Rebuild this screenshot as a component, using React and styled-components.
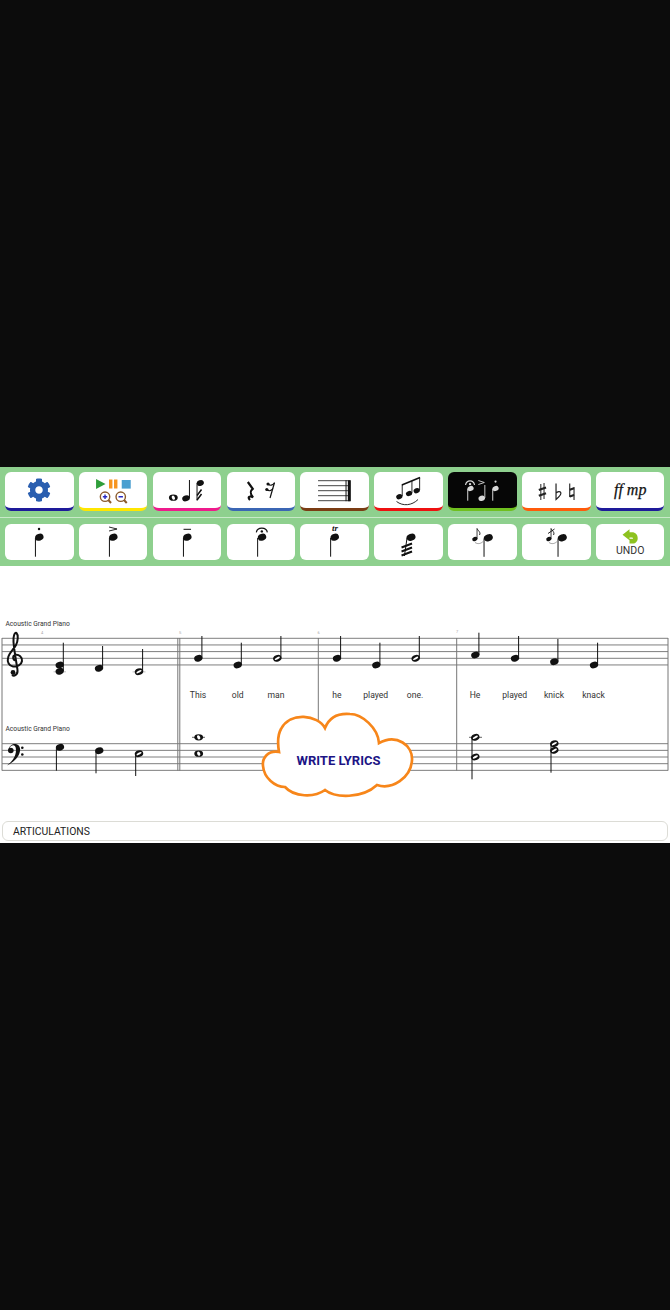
import styled, { createGlobalStyle } from 'styled-components';
import { FaCog } from 'react-icons/fa';

const GlobalStyles = createGlobalStyle`
  * {
    box-sizing: border-box;
  }

  body {
    margin: 0;
    background-color: #0c0c0c;
    font-family: Roboto, sans-serif;
  }
`;

const Screen = styled.div`
  height: 1310px;
  padding-top: 467px;
`;

const Panel = styled.div`
  width: 670px;
  background-color: white;
  padding-bottom: 2px;
`;

const Toolbar = styled.div`
  height: 99px;
  background-color: #8ed08e;
  padding-top: 5px;
`;

const ButtonRow = styled.div`
  display: grid;
  grid-template-columns: repeat(9, 1fr);
  column-gap: 5.3px;
  padding: 0 5.5px 0 5px;
`;

const Divider = styled.div`
  height: 1.5px;
  margin: 5.5px 0 6px;
  background-color: #c8eac8;
`;

const ToolButton = styled.div`
  height: ${({ $accent }) => ($accent ? '39px' : '36px')};
  border-radius: 6px;
  background-color: ${({ $active }) => ($active ? '#060606' : 'white')};
  border-bottom: ${({ $accent }) => ($accent ? `3px solid ${$accent}` : 'none')};
  color: ${({ $active }) => ($active ? '#d8d8d8' : '#111')};
  display: flex;
  flex-direction: column;
  align-items: center;
  justify-content: center;
  overflow: hidden;
`;

const Icon = styled.svg.attrs({ viewBox: '0 0 68.5 36' })`
  display: block;
  width: 100%;
  height: 36px;
  flex: none;
`;

const GearIcon = styled(FaCog)`
  color: #2b5fb0;
  font-size: 24px;
`;

const Dynamics = styled.span`
  font-family: "Liberation Serif", serif;
  font-style: italic;
  font-size: 16px;
  color: #111;
  -webkit-text-stroke: 0.25px #111;
`;

const UndoLabel = styled.span`
  font-size: 10.5px;
  line-height: 11px;
  color: #333;
  margin-top: 1px;
`;

const ScoreArea = styled.div`
  position: relative;
  height: 255px;
`;

const ScoreSvg = styled.svg.attrs({ viewBox: '0 566 670 255' })`
  display: block;
  width: 670px;
  height: 255px;
`;

const ScoreLabel = styled.text`
  font-family: Roboto, sans-serif;
  font-size: 6.7px;
  fill: #333;
`;

const Lyric = styled.text`
  font-family: Roboto, sans-serif;
  font-size: 8.6px;
  fill: #333;
  text-anchor: middle;
`;

const BarNumber = styled.text`
  font-family: Roboto, sans-serif;
  font-size: 4px;
  fill: #aaa;
  text-anchor: middle;
`;

const Cloud = styled.div`
  position: absolute;
  left: 261px;
  top: 146px;
  width: 153px;
  height: 86px;
  display: flex;
  align-items: center;
  justify-content: center;
`;

const CloudShape = styled.svg.attrs({ viewBox: '261 712 153 86' })`
  position: absolute;
  inset: 0;
  width: 153px;
  height: 86px;
`;

const CloudLabel = styled.span`
  position: relative;
  font-weight: 700;
  font-size: 13px;
  color: #1c1485;
  margin: 10px 0 0 2px;
`;

const ArticulationsBar = styled.div`
  margin: 0 2px;
  height: 20px;
  border: 1px solid #dcdcd6;
  border-radius: 6px;
  padding-left: 10px;
  display: flex;
  align-items: center;
  font-size: 10.4px;
  color: #222;
`;

const Head = ({ x, y, rx = 4.2, ry = 3.3, fill = 'currentColor' }) => (
  <ellipse cx={x} cy={y} rx={rx} ry={ry} fill={fill} transform={`rotate(-20 ${x} ${y})`} />
);

const HalfHead = ({ x, y }) => (
  <g>
    <ellipse cx={x} cy={y} rx={4.3} ry={3.3} fill="#111" transform={`rotate(-20 ${x} ${y})`} />
    <ellipse cx={x} cy={y} rx={2.9} ry={1} fill="#fff" transform={`rotate(-28 ${x} ${y})`} />
  </g>
);

const WholeHead = ({ x, y }) => (
  <g>
    <ellipse cx={x} cy={y} rx={4.4} ry={3.1} fill="#111" />
    <ellipse cx={x} cy={y} rx={1.5} ry={2.2} fill="#fff" transform={`rotate(-25 ${x} ${y})`} />
  </g>
);

const Stem = ({ x, y1, y2, width = 1 }) => (
  <line x1={x} x2={x} y1={y1} y2={y2} stroke="currentColor" strokeWidth={width} />
);

const FermataMark = ({ x, y, size = 5.5 }) => (
  <g>
    <path d={`M${x - size} ${y + 4.5} C${x - size + 1} ${y - 1} ${x + size - 1} ${y - 1} ${x + size} ${y + 4.5}`} fill="none" stroke="currentColor" strokeWidth="1.2" />
    <circle cx={x} cy={y + 3.6} r="1.2" fill="currentColor" />
  </g>
);

const AccentMark = ({ x, y, size = 4 }) => (
  <path d={`M${x - size} ${y - 2} L${x + size} ${y} L${x - size} ${y + 2}`} fill="none" stroke="currentColor" strokeWidth="0.9" />
);

const ArticulationNote = ({ x = 34.3, stem = 30.4, children }) => (
  <Icon>
    <Head x={x} y={13.2} rx={4.3} ry={3.4} />
    <Stem x={stem} y1={14} y2={32.7} />
    {children}
  </Icon>
);

const GraceNote = ({ slashed }) => (
  <Icon>
    <Head x={40.3} y={13.8} rx={4.6} ry={3.4} />
    <Stem x={36} y1={14.5} y2={32.8} />
    <Head x={26.8} y={15} rx={2.7} ry={2} />
    <Stem x={29} y1={4.5} y2={15} width={0.8} />
    <path d="M29 4.5 C30 7 33 8 31.5 11" fill="none" stroke="currentColor" strokeWidth="0.9" />
    <path d="M27 18.5 C30 20.5 33 19.5 35 17.5" fill="none" stroke="#777" strokeWidth="0.7" />
    {slashed && <line x1="26" y1="9.5" x2="32.5" y2="5" stroke="currentColor" strokeWidth="0.9" />}
  </Icon>
);

const MediaIcon = () => (
  <Icon>
    <polygon points="17,7 17,17 26.5,12" fill="#2f9e3a" />
    <rect x="30" y="7.5" width="3.4" height="9" fill="#f7941d" />
    <rect x="35" y="7.5" width="3.4" height="9" fill="#f7941d" />
    <rect x="42.7" y="8" width="9" height="8.6" fill="#4a9fd0" />
    <g fill="none" stroke="#8b5a2b" strokeWidth="1.4">
      <circle cx="26" cy="24.7" r="4.7" />
      <circle cx="41.7" cy="24.7" r="4.7" />
      <line x1="29.3" y1="28" x2="32" y2="31" strokeWidth="2" />
      <line x1="45" y1="28" x2="47.7" y2="31" strokeWidth="2" />
    </g>
    <g stroke="#2a2ac0" strokeWidth="1.4">
      <line x1="23.8" y1="24.7" x2="28.2" y2="24.7" />
      <line x1="26" y1="22.5" x2="26" y2="26.9" />
      <line x1="39.5" y1="24.7" x2="43.9" y2="24.7" />
    </g>
  </Icon>
);

const NotesIcon = () => (
  <Icon>
    <WholeHead x={20.3} y={25.7} />
    <Head x={33} y={26.3} rx={3.9} ry={2.9} />
    <Stem x={36.4} y1={8} y2={26} />
    <Head x={47.3} y={11} rx={3.6} ry={2.9} />
    <Stem x={44} y1={11} y2={28.5} />
    <path d="M44 28 L48.5 22 M44 23.5 L48.5 17.5" stroke="currentColor" strokeWidth="1.5" fill="none" />
  </Icon>
);

const RestsIcon = () => (
  <Icon>
    <path d="M20.8 10 L25.7 16.8 C23 19 22.5 21 26 25.4 C22.5 23.5 20 25 23 28" fill="none" stroke="currentColor" strokeWidth="2.2" />
    <line x1="47.5" y1="10.5" x2="43" y2="26" stroke="currentColor" strokeWidth="1.2" />
    <path d="M41 12 C43 14 45.5 13.5 47.4 11 M39.8 17.5 C42 19.5 44 19 45.9 16.5" fill="none" stroke="currentColor" strokeWidth="1.2" />
    <circle cx="41" cy="12" r="1.6" fill="currentColor" />
    <circle cx="39.8" cy="17.5" r="1.6" fill="currentColor" />
  </Icon>
);

const StaffIcon = () => (
  <Icon>
    {[8.7, 13.7, 18.7, 23.7, 28.7].map((y) => (
      <line key={y} x1="18" x2="50" y1={y} y2={y} stroke="#444" strokeWidth="1" />
    ))}
    <Stem x={46} y1={8.2} y2={29.2} width={1} />
    <Stem x={49.3} y1={8.2} y2={29.2} width={3} />
  </Icon>
);

const BeamIcon = () => (
  <Icon>
    <Head x={25.3} y={24.7} rx={3.2} ry={2.5} />
    <Head x={35} y={21.5} rx={3.2} ry={2.5} />
    <Head x={42.7} y={18.7} rx={3.2} ry={2.5} />
    <Stem x={28.2} y1={13} y2={24} width={0.9} />
    <Stem x={37.9} y1={9} y2={21} width={0.9} />
    <Stem x={45.6} y1={5.8} y2={18} width={0.9} />
    <line x1="27.8" y1="13" x2="46" y2="5.6" stroke="currentColor" strokeWidth="1.6" />
    <path d="M22.5 29.5 C29 34.5 38 33.5 44 27.5" fill="none" stroke="currentColor" strokeWidth="0.9" />
  </Icon>
);

const ArticulationsIcon = () => (
  <Icon>
    <Head x={22.5} y={16.5} rx={3.2} ry={2.5} />
    <Stem x={19.7} y1={17} y2={28.7} />
    <FermataMark x={22} y={8.5} size={4.5} />
    <Head x={33.7} y={26.3} rx={3.3} ry={2.6} />
    <Stem x={36.8} y1={13} y2={26} width={0.9} />
    <AccentMark x={33.3} y={10.5} size={3} />
    <Head x={47.5} y={16.5} rx={3.2} ry={2.5} />
    <Stem x={44.7} y1={17} y2={28.7} />
    <circle cx="47.5" cy="9.6" r="1.1" fill="currentColor" />
  </Icon>
);

const AccidentalsIcon = () => (
  <Icon>
    <g stroke="#222" fill="none">
      <path d="M18.8 12 V28 M22 11 V27" strokeWidth="1" />
      <path d="M16.8 18 L24 15.5 M16.8 23.8 L24 21.3" strokeWidth="2.2" />
      <path d="M34 11.5 V27.5 C37 25 39.5 23 38.8 20.7 C38 19 35.5 19.5 34 21.2" strokeWidth="1.2" />
      <path d="M47.7 11.5 V24.5 L52 23 M52 15 V28" strokeWidth="1.1" />
      <path d="M47.7 17.8 L52 16.2 M47.7 24.5 L52 23" strokeWidth="2" />
    </g>
  </Icon>
);

const TremoloIcon = () => (
  <Icon>
    <Head x={37} y={13.3} rx={4.6} ry={3.4} />
    <line x1="33" y1="14" x2="30.4" y2="32" stroke="currentColor" strokeWidth="1" />
    <path d="M27.5 23.5 L38 19.5 M27.5 27.5 L38 23.5 M27.5 31.5 L38 27.5" stroke="currentColor" strokeWidth="1.9" />
  </Icon>
);

const UndoArrow = () => (
  <svg width="16" height="15" viewBox="0 0 16 15">
    <path d="M0.5 5.8 L7.5 0.3 V3.2 H10 C13.5 3.2 15.7 5.6 15.7 9.2 C15.7 12.4 13.5 14.5 11 14.5 H7.5 V9.8 H10 C10.8 9.8 11 9.6 11 9.2 C11 8.7 10.5 8.5 9.5 8.5 H7.5 V11.3 Z" fill="#8dc21f" />
  </svg>
);

const staffLines = (top) => [0, 6.65, 13.3, 20, 26.65].map((offset) => top + offset);

const upNotes = [
  { x: 198.3, y: 658.3, top: 636 },
  { x: 237.7, y: 665, top: 642.7 },
  { x: 277.3, y: 658.3, top: 636, half: true },
  { x: 337, y: 658.3, top: 636 },
  { x: 376.3, y: 665, top: 642.7 },
  { x: 415.7, y: 658.3, top: 636, half: true },
  { x: 475.3, y: 655, top: 632.7 },
  { x: 515, y: 658.3, top: 636 },
  { x: 554.3, y: 661.7, top: 639 },
  { x: 594, y: 665, top: 642.7 },
  { x: 99, y: 668.3, top: 646 },
  { x: 139, y: 671.7, top: 649, half: true, ledger: true },
];

const lyrics = [
  ['This', 198], ['old', 237.7], ['man', 276], ['he', 337], ['played', 375.7],
  ['one.', 415], ['He', 475], ['played', 514.7], ['knick', 554], ['knack', 593.5],
];

const TrebleClef = () => (
  <g>
    <path
      d="M16 660.5 C13 660.5 12 656.5 15 655 C19 654 22.5 657.5 22 661 C21.5 665 17 667 13 666.5 C9 666 7 662 8 658 C9 653 14 649 16 645 C18 641 18.5 635 16.5 633 C14.5 632 13 637 13.5 642 C14 650 17 666 17.5 670 C18 675 14 676.5 12 675"
      fill="none"
      stroke="#111"
      strokeWidth="2"
    />
    <circle cx="13" cy="672.5" r="2.4" fill="#111" />
  </g>
);

const BassClef = () => (
  <g fill="#111">
    <path d="M8.5 750 C9 745.5 13 743.7 15.5 744 C19.5 744.5 20.5 748 20 751 C19 757.5 13 762.5 7 765.5 C11.5 762 16 757 16 750 C16 746.5 14.5 745.2 13 745.3 C11 745.5 9.5 747 9.5 749 Z" />
    <circle cx="10.8" cy="750.5" r="2.8" />
    <circle cx="22.3" cy="747.8" r="1.3" />
    <circle cx="22.3" cy="754.5" r="1.3" />
  </g>
);

const Score = () => (
  <ScoreSvg color="#111">
    <ScoreLabel x="5.5" y="626">Acoustic Grand Piano</ScoreLabel>
    <ScoreLabel x="5.5" y="731">Acoustic Grand Piano</ScoreLabel>
    <BarNumber x="42" y="634">4</BarNumber>
    <BarNumber x="180" y="634">5</BarNumber>
    <BarNumber x="318.5" y="634">6</BarNumber>
    <BarNumber x="457" y="633">7</BarNumber>

    {[...staffLines(638.3), ...staffLines(743.7)].map((y) => (
      <line key={y} x1="2" x2="668" y1={y} y2={y} stroke="#6f6f6f" strokeWidth="0.9" />
    ))}
    {[2, 177.8, 179.8, 318.3, 456.7, 668].map((x) => (
      <line key={x} x1={x} x2={x} y1="638" y2="770.6" stroke="#777" strokeWidth="1" />
    ))}

    <TrebleClef />
    <BassClef />

    <line x1="53.5" x2="66" y1="671.8" y2="671.8" stroke="#bbb" strokeWidth="0.9" />
    <Head x={59.7} y={665} />
    <Head x={59.7} y={671.3} />
    <Stem x={63.3} y1={642.7} y2={671} />

    {upNotes.map(({ x, y, top, half, ledger }) => (
      <g key={x}>
        {ledger && <line x1={x - 6.5} x2={x + 6.5} y1={y + 0.2} y2={y + 0.2} stroke="#bbb" strokeWidth="0.9" />}
        {half ? <HalfHead x={x} y={y} /> : <Head x={x} y={y} />}
        <Stem x={x + 3.6} y1={top} y2={y} />
      </g>
    ))}

    {lyrics.map(([word, x]) => (
      <Lyric key={x} x={x} y="698">{word}</Lyric>
    ))}

    <Head x={60} y={747.3} />
    <Stem x={56.4} y1={748} y2={770.7} />
    <Head x={99.3} y={750.7} />
    <Stem x={96} y1={751} y2={773.3} />
    <HalfHead x={139} y={753.7} />
    <Stem x={135.7} y1={754} y2={776} />

    <line x1="192" x2="205" y1="737.3" y2="737.3" stroke="#555" strokeWidth="0.9" />
    <WholeHead x={198.7} y={737.3} />
    <WholeHead x={198.7} y={753.7} />

    <line x1="469" x2="482" y1="737.3" y2="737.3" stroke="#555" strokeWidth="0.9" />
    <HalfHead x={475.3} y={737.3} />
    <HalfHead x={475.3} y={757} />
    <Stem x={472} y1={738} y2={779.3} />

    <HalfHead x={554.3} y={743.7} />
    <HalfHead x={554.3} y={750.3} />
    <Stem x={551} y1={744} y2={772.7} />
  </ScoreSvg>
);

const toolButtons = [
  { id: 'settings', accent: '#1e1a9a', content: <GearIcon /> },
  { id: 'media', accent: '#ffe600', content: <MediaIcon /> },
  { id: 'notes', accent: '#ee1a8c', content: <NotesIcon /> },
  { id: 'rests', accent: '#3b66b4', content: <RestsIcon /> },
  { id: 'staff', accent: '#7a3c14', content: <StaffIcon /> },
  { id: 'beams', accent: '#ee1010', content: <BeamIcon /> },
  { id: 'articulations', accent: '#6fbf1f', active: true, content: <ArticulationsIcon /> },
  { id: 'accidentals', accent: '#ff5a0a', content: <AccidentalsIcon /> },
  { id: 'dynamics', accent: '#1e1a9a', content: <Dynamics>ff mp</Dynamics> },
];

const articulationButtons = [
  { id: 'staccato', content: <ArticulationNote><circle cx="34" cy="5" r="1.2" fill="currentColor" /></ArticulationNote> },
  { id: 'accent', content: <ArticulationNote><AccentMark x={34} y={5} /></ArticulationNote> },
  { id: 'tenuto', content: <ArticulationNote><line x1="30.5" x2="38" y1="5.3" y2="5.3" stroke="currentColor" strokeWidth="1" /></ArticulationNote> },
  { id: 'fermata', content: <ArticulationNote x={35} stem={30.6}><FermataMark x={34.8} y={3.8} /></ArticulationNote> },
  {
    id: 'trill',
    content: (
      <ArticulationNote x={34.7} stem={30.6}>
        <text x="35" y="7" textAnchor="middle" fontFamily="Liberation Serif, serif" fontStyle="italic" fontWeight="bold" fontSize="9" fill="#111">tr</text>
      </ArticulationNote>
    ),
  },
  { id: 'tremolo', content: <TremoloIcon /> },
  { id: 'grace', content: <GraceNote /> },
  { id: 'acciaccatura', content: <GraceNote slashed /> },
  {
    id: 'undo',
    content: (
      <>
        <UndoArrow />
        <UndoLabel>UNDO</UndoLabel>
      </>
    ),
  },
];

export default function App() {
  return (
    <>
      <GlobalStyles />
      <Screen>
        <Panel>
          <Toolbar>
            <ButtonRow>
              {toolButtons.map(({ id, accent, active, content }) => (
                <ToolButton key={id} $accent={accent} $active={active}>
                  {content}
                </ToolButton>
              ))}
            </ButtonRow>
            <Divider />
            <ButtonRow>
              {articulationButtons.map(({ id, content }) => (
                <ToolButton key={id}>{content}</ToolButton>
              ))}
            </ButtonRow>
          </Toolbar>
          <ScoreArea>
            <Score />
            <Cloud>
              <CloudShape>
                <path
                  d="M325 728 C318 715 290 711 281 729 C277 736 278 746 279 752 C268 750 262 758 263 766 C264 778 275 787 285 787 C294 797 314 798 325 790 C335 798 362 799 377 785 C392 790 411 778 412 760 C413 746 397 733 379 743 C378 728 362 714 350 714 C338 713 329 718 325 728 Z"
                  fill="white"
                  stroke="#f7861a"
                  strokeWidth="2.7"
                />
              </CloudShape>
              <CloudLabel>WRITE LYRICS</CloudLabel>
            </Cloud>
          </ScoreArea>
          <ArticulationsBar>ARTICULATIONS</ArticulationsBar>
        </Panel>
      </Screen>
    </>
  );
}
